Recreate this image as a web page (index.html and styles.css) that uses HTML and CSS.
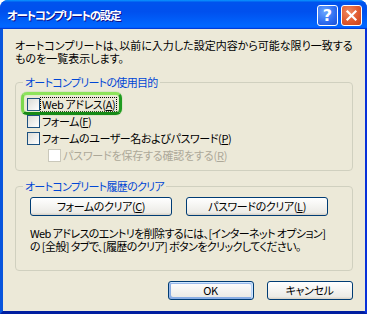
FILE: index.html
```html
<!DOCTYPE html>
<html lang="ja">
<head>
<meta charset="utf-8">
<title>オートコンプリートの設定</title>
<link rel="stylesheet" href="styles.css">
</head>
<body>
<div class="window">
  <div class="titlebar">
    <span class="title">オートコンプリートの設定</span>
    <div class="controls">
      <span class="ctl help">?</span>
      <span class="ctl close"><svg width="19" height="19" viewBox="0 0 19 19"><path d="M5.5 5.5 L13.5 13.5 M13.5 5.5 L5.5 13.5" stroke="#fff" stroke-width="2.2" stroke-linecap="square"/></svg></span>
    </div>
  </div>
  <div class="frame">
    <div class="client">
      <p class="intro">オートコンプリートは、以前に入力した設定内容から可能な限り一致する<br>ものを一覧表示します。</p>
      <fieldset class="group">
        <legend>オートコンプリートの使用目的</legend>
        <div class="group-body checks">
          <div class="row">
            <span class="highlight"></span>
            <span class="box"></span><span class="label focus">Web アドレス(<u>A</u>)</span>
          </div>
          <div class="row">
            <span class="box"></span><span class="label">フォーム(<u>F</u>)</span>
          </div>
          <div class="row">
            <span class="box"></span><span class="label">フォームのユーザー名およびパスワード(<u>P</u>)</span>
          </div>
          <div class="row sub disabled">
            <span class="box"></span><span class="label">パスワードを保存する確認をする(<u>R</u>)</span>
          </div>
        </div>
      </fieldset>
      <fieldset class="group group2">
        <legend>オートコンプリート履歴のクリア</legend>
        <div class="group-body clear">
          <div class="btn-row">
            <button class="btn wide">フォームのクリア(<u>C</u>)</button>
            <button class="btn wide">パスワードのクリア(<u>L</u>)</button>
          </div>
          <p class="note">Web アドレスのエントリを削除するには、[インターネット オプション]<br>の [全般] タブで、[履歴のクリア] ボタンをクリックしてください。</p>
        </div>
      </fieldset>
      <div class="footer">
        <button class="btn default">OK</button>
        <button class="btn">キャンセル</button>
      </div>
    </div>
  </div>
</div>
</body>
</html>
```

FILE: styles.css
```css
* { box-sizing: border-box; }
html, body { margin: 0; padding: 0; background: #ffffff; }
body {
  font-family: "Noto Sans CJK JP", "Noto Sans", sans-serif;
  font-size: 11px;
  font-feature-settings: "palt";
  color: #000;
  white-space: nowrap;
}
.window {
  width: 367px;
  height: 314px;
  display: flex;
  flex-direction: column;
  border-radius: 8px 8px 0 0;
  overflow: hidden;
  background: #0855dd;
}
.titlebar {
  height: 29px;
  flex: none;
  display: flex;
  align-items: center;
  justify-content: space-between;
  padding: 0 5px 0 7px;
  background: linear-gradient(180deg, #0997ff, #0053ee 8%, #0050ee 40%, #0066ff 88%, #0066ff 93%, #005bff 95%, #003dd7 96%, #003dd7);
}
.title {
  color: #fff;
  font-weight: bold;
  font-size: 11.5px;
  letter-spacing: -1.3px;
  line-height: 16px;
  text-shadow: 1px 1px #0f1089;
  padding-top: 1px;
}
.controls { display: flex; gap: 3px; padding-top: 2px; }
.ctl {
  width: 21px;
  height: 21px;
  border: 1px solid #fff;
  border-radius: 3px;
  display: flex;
  align-items: center;
  justify-content: center;
  color: #fff;
}
.help {
  background: radial-gradient(circle at 35% 30%, #6aa6ff, #2d6cf0 60%, #1c4fd6);
  font-family: "DejaVu Sans", sans-serif;
  font-weight: bold;
  font-size: 16px;
  line-height: 1;
}
.close {
  background: radial-gradient(circle at 35% 30%, #f08a62, #e05a2e 55%, #c8401a);
}
.close svg { display: block; }
.frame {
  flex: 1;
  display: flex;
  border-style: solid;
  border-width: 0 4px 3px 3px;
  border-color: #0855dd #0831d9 #001ea0 #0855dd;
}
.client {
  flex: 1;
  background: #ece9d8;
  padding: 10px 12px 0 12px;
  display: flex;
  flex-direction: column;
}
.intro { margin: 0; line-height: 13px; }
.group {
  margin: 11px 0 0;
  padding: 0;
  border: 1px solid #d0d0bf;
  border-radius: 4px;
  min-width: 0;
}
.group legend {
  margin-left: 7px;
  padding: 0 2px;
  color: #0046d5;
  line-height: 12px;
  letter-spacing: -0.7px;
}
.group-body.checks { padding: 8px 0 6px 11px; }
.row {
  position: relative;
  height: 17px;
  display: flex;
  align-items: center;
}
.box {
  width: 13px;
  height: 13px;
  flex: none;
  border: 1px solid #1c5180;
  background: linear-gradient(135deg, #dcdcd7, #ffffff);
}
.label {
  border: 1px dotted transparent;
  padding: 0 1px;
  line-height: 13px;
  letter-spacing: -0.4px;
}
.label.focus { border-color: #000; }
.row.sub { padding-left: 21px; }
.disabled .box { border-color: #cac8bb; background: #fff; }
.disabled .label { color: #aca899; letter-spacing: -0.2px; }
.highlight {
  position: absolute;
  left: -6px;
  top: -4px;
  width: 101px;
  height: 23px;
  border: 3px solid;
  border-color: #8ee35c #1f9b1f #168a16 #7bd84c;
  border-radius: 6px;
  box-shadow: inset 0 0 2px #c8f7a8, 0 0 1px #4dbb33;
  pointer-events: none;
}
.group2 { margin-top: 9px; }
.group-body.clear { padding: 5px 0 17px 14px; }
.btn-row { display: flex; gap: 14px; }
.btn {
  font-family: inherit;
  font-size: 11px;
  font-feature-settings: "palt";
  letter-spacing: -0.4px;
  color: #000;
  height: 19px;
  padding: 0;
  border: 1px solid #003c74;
  border-radius: 3px;
  background: linear-gradient(180deg, #fff, #ecebe6 86%, #d6d0c5);
  line-height: 15px;
}
.btn.wide { width: 142px; }
.note { margin: 11px 0 0; line-height: 13px; letter-spacing: -0.6px; }
.footer {
  display: flex;
  justify-content: flex-end;
  gap: 13px;
  margin-top: 10px;
}
.footer .btn { width: 86px; }
.btn.default {
  box-shadow: inset -1px 1px #cee7ff, inset 1px 2px #98b8ea, inset -2px 2px #bcd4f6, inset 1px -1px #89ade4, inset 2px -2px #89ade4;
}
```
